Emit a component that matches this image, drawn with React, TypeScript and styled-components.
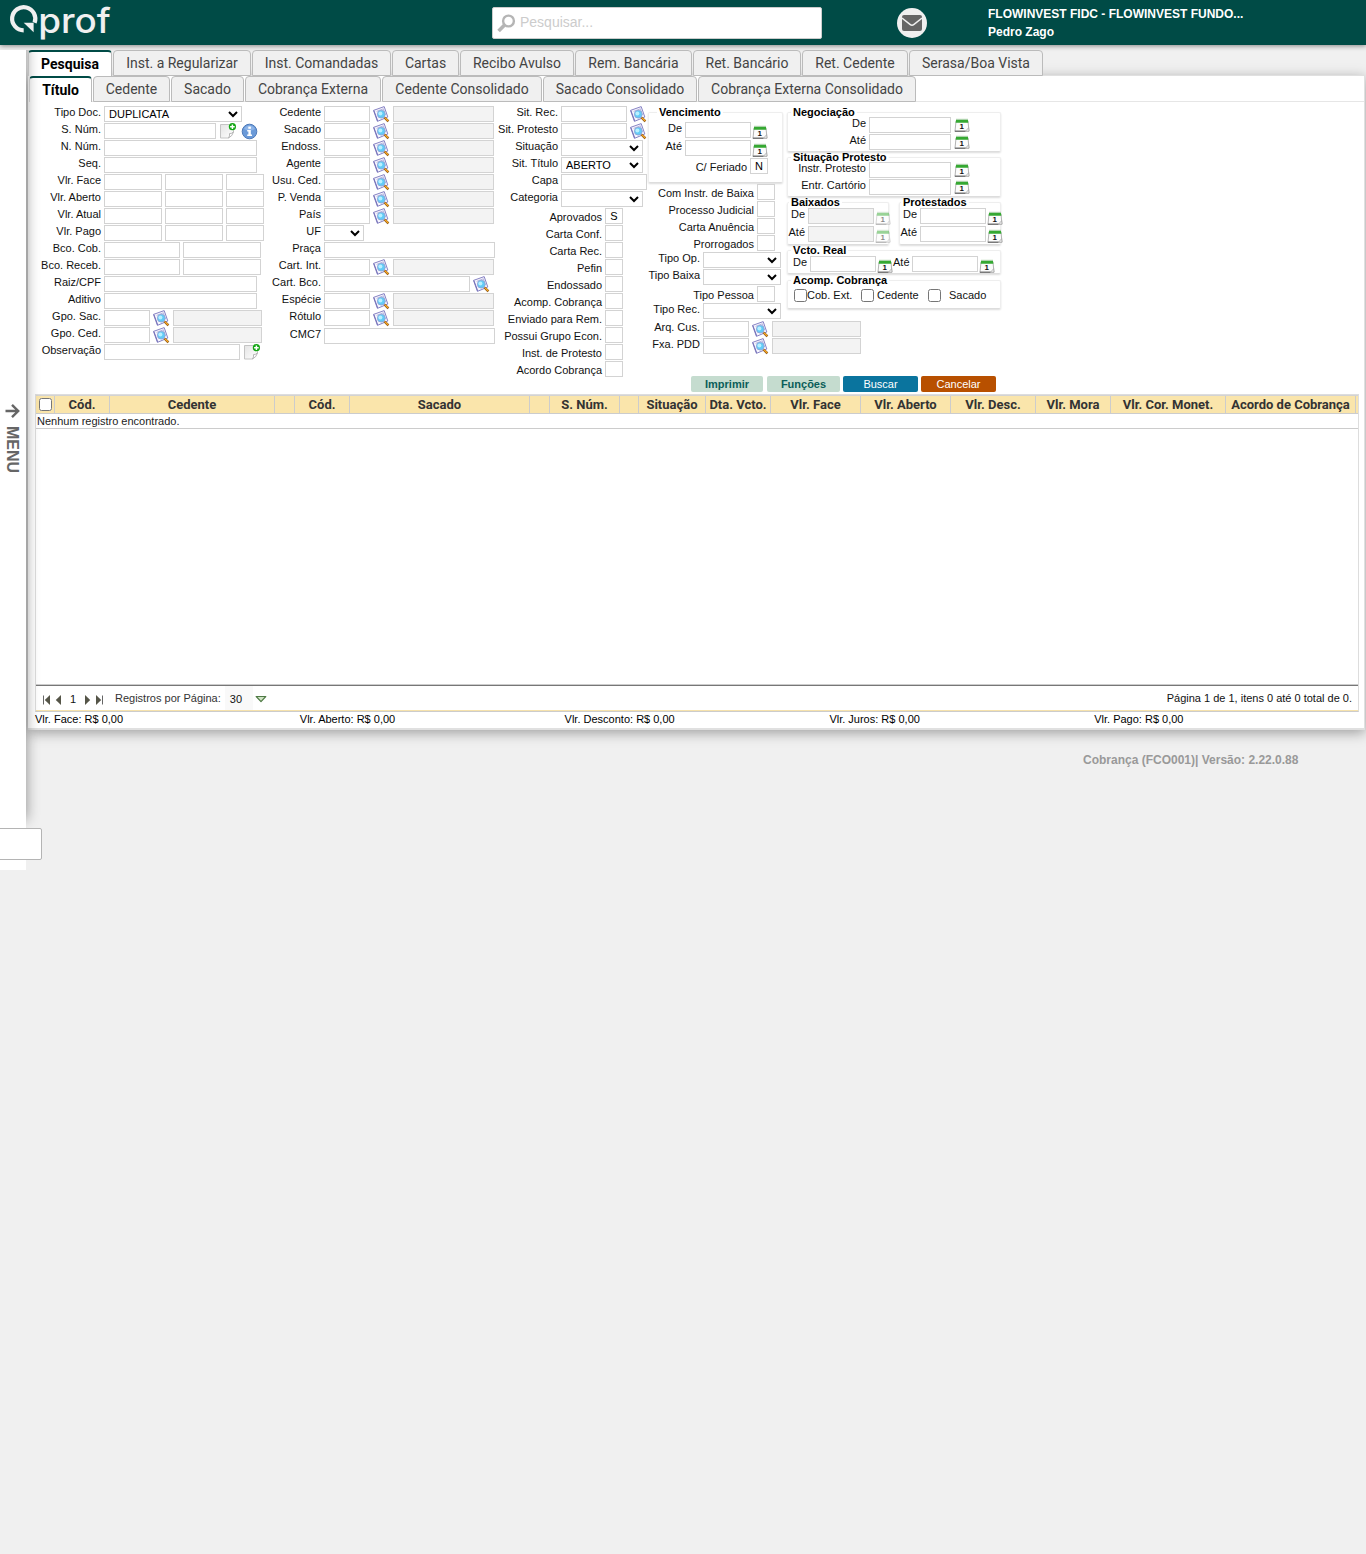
import React from "react";
import styled, { createGlobalStyle, css } from "styled-components";

const sans = '"Liberation Sans", Arial, sans-serif';
const roboto = 'Roboto, "Liberation Sans", sans-serif';
const teal = "#004b46";

const GlobalStyle = createGlobalStyle`
  html, body { margin: 0; padding: 0; background: #f0f0f0; }
  body { font-family: ${sans}; font-size: 11px; color: #111; }
  *, *::before, *::after { box-sizing: border-box; }
`;

const Page = styled.div`
  width: 1366px;
  min-height: 1554px;
  background: #f0f0f0;
  overflow: hidden;
`;

/* ---------- header ---------- */

const Header = styled.header`
  display: flex;
  height: 45px;
  background: ${teal};
  box-shadow: 0 1px 5px rgba(0, 0, 0, 0.45);
`;

const LogoBox = styled.div`
  width: 492px;
  padding-left: 9px;
  svg { display: block; overflow: visible; }
`;

const SearchBox = styled.label`
  display: flex;
  align-items: center;
  width: 330px;
  height: 32px;
  margin-top: 7px;
  padding-left: 4px;
  gap: 4px;
  background: #fff;
  border: 1px solid #ccc;
  border-radius: 2px;
`;

const SearchInput = styled.input`
  flex: 1;
  border: 0;
  outline: 0;
  padding: 0 0 2px;
  font: 14px ${sans};
  background: transparent;
  &::placeholder { color: #ccc; }
`;

const MailButton = styled.button`
  display: flex;
  align-items: center;
  justify-content: center;
  width: 30px;
  height: 30px;
  margin: 8px 0 0 75px;
  padding: 0;
  border: 0;
  border-radius: 50%;
  background: #f0f0f0;
`;

const UserInfo = styled.div`
  margin: 5px 0 0 61px;
  font: bold 12px/18px ${sans};
  color: #fff;
`;

/* ---------- body ---------- */

const Body = styled.div`
  display: flex;
  align-items: flex-start;
  padding-top: 5px;
`;

const Sidebar = styled.aside`
  position: relative;
  z-index: 2;
  width: 26px;
  height: 820px;
  background: #fff;
  flex: none;
`;

const MenuHandle = styled.div`
  display: flex;
  flex-direction: column;
  align-items: center;
  width: 26px;
  height: 778px;
  padding: 353px 1px 0 0;
  clip-path: inset(0 -30px -30px 0);
  box-shadow: 0 -8px 14px rgba(0, 0, 0, 0.42);
  background: #fff;
`;

const MenuText = styled.span`
  margin: 7px 1px 0 0;
  writing-mode: vertical-rl;
  font: bold 16px/18px ${sans};
  color: #666;
`;

const CornerBox = styled.div`
  position: absolute;
  left: -2px;
  top: 778px;
  width: 44px;
  height: 32px;
  background: #fff;
  border: 1px solid #b4b4b4;
  border-radius: 2px;
`;

const Main = styled.main`
  flex: none;
  width: 1337px;
  margin-left: 2px;
`;

const TabRow = styled.nav<{ $inner?: boolean }>`
  display: flex;
  gap: 1px;
  height: 26px;
  position: relative;
  ${(p) =>
    p.$inner &&
    css`
      border-bottom: 1px solid #e6e6e6;
    `}
`;

const Tab = styled.button<{ $w: number; $active?: boolean }>`
  flex: none;
  width: ${(p) => p.$w}px;
  height: 26px;
  padding: 0 0 1px;
  font: 14px ${roboto};
  color: #444;
  white-space: nowrap;
  background: #f0f0f0;
  border: 1px solid #bbb;
  border-radius: 4px 4px 0 0;
  ${(p) =>
    p.$active &&
    css`
      font-weight: bold;
      color: #000;
      background: #fff;
      border-top: 2px solid ${teal};
      border-bottom: 0;
      border-left-color: #e0e0e0;
    `}
`;

const Panel = styled.section`
  width: 1337px;
  height: 655px;
  margin-top: -1px;
  padding: 0 0 0 1px;
  background: #fff;
  border: 1px solid #e0e0e0;
  border-bottom-width: 2px;
  border-left-width: 0;
  box-shadow: 0 3px 12px rgba(0, 0, 0, 0.34);
`;

/* ---------- form ---------- */

const Columns = styled.div`
  display: flex;
  align-items: flex-start;
  height: 274px;
  padding-top: 4px;
`;

const Column = styled.div<{ $w: number; $top?: number }>`
  flex: none;
  width: ${(p) => p.$w}px;
  padding-top: ${(p) => p.$top ?? 0}px;
`;

const Row = styled.div<{ $h?: number; $mt?: number; $tight?: boolean }>`
  display: flex;
  align-items: flex-start;
  gap: ${(p) => (p.$tight ? 0 : 3)}px;
  height: ${(p) => p.$h ?? 17}px;
  margin-top: ${(p) => p.$mt ?? 0}px;
`;

const Label = styled.span<{ $w?: number; $drop?: number; $left?: boolean }>`
  flex: none;
  width: ${(p) => (p.$w ? `${p.$w}px` : "auto")};
  padding-top: ${(p) => p.$drop ?? 0}px;
  text-align: ${(p) => (p.$left ? "left" : "right")};
  line-height: 13px;
  white-space: nowrap;
`;

const Field = styled.input<{ $w: number }>`
  flex: none;
  width: ${(p) => p.$w}px;
  height: 16px;
  padding: 0;
  border: 1px solid #d3d3d3;
  border-radius: 0;
  background: #fff;
  font: 11px ${sans};
  color: #000;
  &:disabled { background: #f3f3f3; }
`;

const Flag = styled(Field).attrs({ $w: 18 })`
  text-align: center;
`;

const Select = styled.select<{ $w: number }>`
  flex: none;
  width: ${(p) => p.$w}px;
  height: 16px;
  padding: 0;
  border: 1px solid #d3d3d3;
  border-radius: 0;
  background-color: #fff;
  font: 11px ${sans};
  color: #000;
`;

const IconSlot = styled.span<{ $ml?: number; $mr?: number; $mt?: number; $dim?: boolean }>`
  flex: none;
  display: block;
  width: 16px;
  height: 16px;
  margin: ${(p) => p.$mt ?? 0}px ${(p) => p.$mr ?? 0}px 0 ${(p) => p.$ml ?? 0}px;
  opacity: ${(p) => (p.$dim ? 0.5 : 1)};
  svg { display: block; overflow: visible; }
`;

const Group = styled.div<{ $w: number; $h: number; $mt?: number }>`
  flex: none;
  width: ${(p) => p.$w}px;
  height: ${(p) => p.$h}px;
  margin-top: ${(p) => p.$mt ?? 0}px;
  border: 1px solid #eee;
  border-bottom-color: #ddd;
  border-radius: 2px;
  box-shadow: 0 1px 2px rgba(0, 0, 0, 0.14);
`;

const Legend = styled.div<{ $ml: number }>`
  width: max-content;
  height: 12px;
  margin: -7px 0 0 ${(p) => p.$ml}px;
  padding: 0 2px;
  background: linear-gradient(#fff, #fff) center / 100% 4px no-repeat;
  font: bold 11px/13px ${sans};
  color: #000;
`;

const GroupPair = styled.div`
  display: flex;
  justify-content: space-between;
  margin-top: 5px;
`;

const Check = styled.input.attrs({ type: "checkbox" })<{ $ml?: number; $mr?: number }>`
  flex: none;
  width: 13px;
  height: 13px;
  margin: 0 ${(p) => p.$mr ?? 0}px 0 ${(p) => p.$ml ?? 0}px;
`;

const Actions = styled.div`
  display: flex;
  gap: 3px;
  height: 18px;
  padding-left: 662px;
`;

const Button = styled.button<{ $w: number; $bg: string; $soft?: boolean; $mr?: number }>`
  width: ${(p) => p.$w}px;
  height: 16px;
  margin-right: ${(p) => p.$mr ?? 0}px;
  padding: 0;
  border: 0;
  border-radius: 2px;
  background: ${(p) => p.$bg};
  color: ${(p) => (p.$soft ? "#0b5e59" : "#fff")};
  font: ${(p) => (p.$soft ? "bold" : "normal")} 11px/16px ${sans};
`;

/* ---------- grid ---------- */

const Grid = styled.div`
  width: 1324px;
  height: 318px;
  margin-left: 6px;
  border: 1px solid #ddd;
  border-bottom-color: #ccc;
  display: flex;
  flex-direction: column;
`;

const HeadRow = styled.div`
  display: flex;
  height: 19px;
  background: #fae5ab;
  border-top: 1px solid #d3d3d3;
  border-bottom: 1px solid #ccc;
`;

const HeadCell = styled.div<{ $w: number }>`
  flex: none;
  display: flex;
  align-items: center;
  justify-content: center;
  width: ${(p) => p.$w}px;
  border-right: 1px solid #ccc;
  font: bold 13px/17px ${roboto};
  color: #333;
  white-space: nowrap;
`;

const EmptyRow = styled.div`
  height: 15px;
  padding-left: 1px;
  border-bottom: 1px solid #ccc;
  line-height: 15px;
  color: #222;
`;

const GridSpace = styled.div`
  flex: 1;
`;

const Pager = styled.div`
  display: flex;
  align-items: center;
  height: 26px;
  border-top: 1px solid #777;
  border-bottom: 1px solid #f6e2ac;
  padding: 0 6px 0 6px;
  box-shadow: 0 -1px 0 #ccc;
`;

const PageNo = styled.span`
  width: 22px;
  padding-top: 1px;
  text-align: center;
`;

const PagerLabel = styled.span`
  margin: 0 4px 0 11px;
  color: #333;
`;

const PageSize = styled.span`
  display: flex;
  align-items: center;
  width: 28px;
  height: 24px;
  margin-right: 2px;
  padding: 1px 0 0 5px;
  background: #f9f9f9;
`;

const PagerIcon = styled.span<{ $mr?: number; $mt?: number }>`
  margin: ${(p) => p.$mt ?? 4}px ${(p) => p.$mr ?? 0}px 0 0;
  svg { display: block; }
`;

const PagerSummary = styled.span`
  margin-left: auto;
`;

const Totals = styled.div`
  display: grid;
  grid-template-columns: repeat(5, 264.8px);
  margin-left: 6px;
  line-height: 14px;
  color: #000;
`;

const Version = styled.footer`
  margin: 23px 0 0 1055px;
  font: bold 12px/14px ${sans};
  color: #999;
`;

/* ---------- icons ---------- */

const Logo = () => (
  <svg width="104" height="45" viewBox="0 -4 104 45">
    <path d="M14.7 26.3 A11.6 11.6 0 1 1 25.6 18.7" fill="none" stroke="#f0f0f0" strokeWidth="4.2" />
    <path d="M14.7 18.7 H24.6 V28.3 Z" fill="#f0f0f0" />
    <text x="29.3" y="29" fontFamily="Inter, sans-serif" fontSize="34" fontWeight="500" fill="#f0f0f0" textLength="72.5" lengthAdjust="spacingAndGlyphs">
      prof
    </text>
  </svg>
);

const SearchGlyph = () => (
  <svg width="19" height="19" viewBox="0 0 19 19" fill="none" stroke="#b5b5b5">
    <circle cx="11.5" cy="7" r="5.4" strokeWidth="2.4" />
    <path d="M7.3 11.2 L1.6 17" strokeWidth="3.6" />
  </svg>
);

const MailGlyph = () => (
  <svg width="20" height="16" viewBox="0 0 20 16">
    <rect width="20" height="16" rx="2" fill="#666" />
    <path d="M0 3 L8 9.4 Q10 11 12 9.4 L20 3" fill="none" stroke="#f0f0f0" strokeWidth="1.4" />
  </svg>
);

const ArrowGlyph = () => (
  <svg width="15" height="16" viewBox="0 0 15 16" fill="none" stroke="#666" strokeWidth="2.4">
    <path d="M0.5 8 H13 M7 1.8 L13.2 8 L7 14.2" />
  </svg>
);

const Lookup = ({ mr }: { mr?: number }) => (
  <IconSlot $mr={mr}>
    <svg width="16" height="16" viewBox="0 0 16 16">
      <path d="M0.5 4.4 L11.2 0.6 L14.8 11 L4.4 15.4 Z" fill="#f6f5fd" stroke="#8783c4" strokeWidth="1" />
      <path d="M0.9 4.6 L4.7 14.9" stroke="#7570b8" strokeWidth="1" />
      <path d="M3.6 5.4 L10.4 2.8 L12.4 9" fill="none" stroke="#aaa7d8" strokeWidth="0.8" />
      <circle cx="8.3" cy="8.2" r="3.9" fill="#62ccf7" stroke="#8fa6d8" strokeWidth="0.9" />
      <circle cx="7.4" cy="7.6" r="2" fill="#b9f0ff" />
      <path d="M11.5 11.5 L15.4 15.4" stroke="#7a4a14" strokeWidth="2.4" />
      <path d="M11.9 11.7 L15.2 15" stroke="#f8a824" strokeWidth="1.4" />
    </svg>
  </IconSlot>
);

const NoteAdd = () => (
  <IconSlot $ml={1} $mr={2}>
    <svg width="16" height="16" viewBox="0 0 16 16">
      <defs>
        <linearGradient id="paper" x1="0" y1="0" x2="1" y2="1">
          <stop offset="0" stopColor="#e4e4e4" />
          <stop offset="1" stopColor="#fff" />
        </linearGradient>
      </defs>
      <path d="M0.5 1.5 H13.5 V9.5 L8.5 15 H0.5 Z" fill="url(#paper)" />
      <path d="M13.5 9 V7 M9 1.5 H0.5 V15 H8.5" fill="none" stroke="#c4c4c4" />
      <path d="M13.5 9 Q11.5 10.8 9.5 10.6 Q10 13 8.5 15 Q12.5 13 13.5 9 Z" fill="#fff" stroke="#999" strokeWidth="0.7" />
      <circle cx="12.4" cy="3.7" r="3.6" fill="#12a512" />
      <path d="M12.4 1.4 V6 M10.1 3.7 H14.7" stroke="#fff" strokeWidth="1.5" />
    </svg>
  </IconSlot>
);

const Info = () => (
  <IconSlot>
    <svg width="17" height="17" viewBox="0 0 17 17">
      <circle cx="8.5" cy="8.5" r="7.3" fill="#6b9ad8" stroke="#4d79b8" />
      <path d="M3 6 A6 6 0 0 1 14 6 Q8.5 9 3 6" fill="#8db4e8" />
      <rect x="7.3" y="3.6" width="2.6" height="2.2" fill="#fff" />
      <path d="M6.2 7 H9.8 V11.4 H11 V12.9 H6.2 V11.4 H7.4 V8.4 H6.2 Z" fill="#fff" />
    </svg>
  </IconSlot>
);

const Calendar = ({ ml, mr, mt, dim }: { ml?: number; mr?: number; mt?: number; dim?: boolean }) => (
  <IconSlot $ml={ml} $mr={mr} $mt={mt} $dim={dim}>
    <svg width="16" height="16" viewBox="0 -0.7 16 16">
      <path d="M2 3.5 H14 L15 13.5 H1 Z" fill="#fcfcfc" stroke="#aaa" strokeWidth="0.9" />
      <path d="M2 2 H14 L14.3 5 H1.7 Z" fill="#35a832" />
      <path d="M2 1.6 H14" stroke="#9cc79a" strokeWidth="0.8" />
      <path d="M0.8 13.5 H11.5" stroke="#555" strokeWidth="1" />
      <path d="M14.6 10 L11.5 13.5 H15 Z" fill="#eee" stroke="#999" strokeWidth="0.6" />
      <text x="7.8" y="11.6" textAnchor="middle" fontFamily="Liberation Sans" fontWeight="bold" fontSize="8" fill="#111">1</text>
    </svg>
  </IconSlot>
);

const PagerArrow = ({ back, bar, mr }: { back?: boolean; bar?: boolean; mr?: number }) => {
  const w = bar ? 9 : 7;
  return (
    <PagerIcon $mr={mr}>
      <svg width={w} height="10" viewBox={`0 0 ${w} 10`}>
        <g transform={back ? `translate(${w} 0) scale(-1 1)` : undefined}>
          <path d="M1 0 L6.2 5 L1 10 Z" fill="#555548" />
          {bar && <path d="M7.5 0.5 V9.5" stroke="#666" />}
        </g>
      </svg>
    </PagerIcon>
  );
};

const DropGlyph = () => (
  <PagerIcon $mt={2}>
    <svg width="12" height="8" viewBox="0 0 12 8">
      <path d="M1.2 1.5 H10.8 L6 6.6 Z" fill="#cfe3c4" stroke="#4f7a45" strokeWidth="1.2" strokeLinejoin="round" />
    </svg>
  </PagerIcon>
);

/* ---------- data ---------- */

const mainTabs: [string, number][] = [
  ["Pesquisa", 84], ["Inst. a Regularizar", 138], ["Inst. Comandadas", 139], ["Cartas", 67],
  ["Recibo Avulso", 114], ["Rem. Bancária", 117], ["Ret. Bancário", 108], ["Ret. Cedente", 106], ["Serasa/Boa Vista", 134],
];
const subTabs: [string, number][] = [
  ["Título", 63], ["Cedente", 77], ["Sacado", 73], ["Cobrança Externa", 136],
  ["Cedente Consolidado", 160], ["Sacado Consolidado", 154], ["Cobrança Externa Consolidado", 218],
];
const gridColumns: [string, number][] = [
  ["Cód.", 55], ["Cedente", 165], ["", 20], ["Cód.", 55], ["Sacado", 180], ["", 20], ["S. Núm.", 70], ["", 19],
  ["Situação", 67], ["Dta. Vcto.", 65], ["Vlr. Face", 90], ["Vlr. Aberto", 90], ["Vlr. Desc.", 85],
  ["Vlr. Mora", 75], ["Vlr. Cor. Monet.", 115], ["Acordo de Cobrança", 130],
];

const LookupRow = ({ label, lw, w }: { label: string; lw: number; w: number }) => (
  <Row>
    <Label $w={lw}>{label}</Label>
    <Field $w={46} />
    <Lookup mr={1} />
    <Field $w={w} disabled />
  </Row>
);

const FieldRow = ({ label, lw, widths, mt }: { label: string; lw: number; widths: number[]; mt?: number }) => (
  <Row $mt={mt}>
    <Label $w={lw}>{label}</Label>
    {widths.map((w, i) => <Field key={i} $w={w} />)}
  </Row>
);

const SelectRow = ({ label, lw, w, value = "" }: { label: string; lw: number; w: number; value?: string }) => (
  <Row>
    <Label $w={lw}>{label}</Label>
    <Select $w={w} defaultValue={value}><option>{value}</option></Select>
  </Row>
);

const FlagRow = ({ label, lw, value = "", mt }: { label: string; lw: number; value?: string; mt?: number }) => (
  <Row $mt={mt}>
    <Label $w={lw} $drop={3}>{label}</Label>
    <Flag defaultValue={value} />
  </Row>
);

export default function App() {
  return (
    <Page>
      <GlobalStyle />
      <Header>
        <LogoBox><Logo /></LogoBox>
        <SearchBox>
          <SearchGlyph />
          <SearchInput placeholder="Pesquisar..." />
        </SearchBox>
        <MailButton aria-label="Mensagens"><MailGlyph /></MailButton>
        <UserInfo>
          FLOWINVEST FIDC - FLOWINVEST FUNDO...<br />Pedro Zago
        </UserInfo>
      </Header>

      <Body>
        <Sidebar>
          <MenuHandle>
            <ArrowGlyph />
            <MenuText>MENU</MenuText>
          </MenuHandle>
          <CornerBox />
        </Sidebar>

        <Main>
          <TabRow>
            {mainTabs.map(([t, w], i) => <Tab key={t} $w={w} $active={i === 0}>{t}</Tab>)}
          </TabRow>
          <Panel>
            <TabRow $inner>
              {subTabs.map(([t, w], i) => <Tab key={t} $w={w} $active={i === 0}>{t}</Tab>)}
            </TabRow>

            <Columns>
              <Column $w={235}>
                <SelectRow label="Tipo Doc." lw={72} w={138} value="DUPLICATA" />
                <Row>
                  <Label $w={72}>S. Núm.</Label>
                  <Field $w={112} />
                  <NoteAdd />
                  <Info />
                </Row>
                <FieldRow label="N. Núm." lw={72} widths={[153]} />
                <FieldRow label="Seq." lw={72} widths={[153]} />
                {["Vlr. Face", "Vlr. Aberto", "Vlr. Atual", "Vlr. Pago"].map((l) => (
                  <FieldRow key={l} label={l} lw={72} widths={[58, 58, 38]} />
                ))}
                <FieldRow label="Bco. Cob." lw={72} widths={[76, 78]} />
                <FieldRow label="Bco. Receb." lw={72} widths={[76, 78]} />
                <FieldRow label="Raiz/CPF" lw={72} widths={[153]} />
                <FieldRow label="Aditivo" lw={72} widths={[153]} />
                <LookupRow label="Gpo. Sac." lw={72} w={89} />
                <LookupRow label="Gpo. Ced." lw={72} w={89} />
                <Row>
                  <Label $w={72}>Observação</Label>
                  <Field $w={136} />
                  <NoteAdd />
                </Row>
              </Column>

              <Column $w={231}>
                {["Cedente", "Sacado", "Endoss.", "Agente", "Usu. Ced.", "P. Venda", "País"].map((l) => (
                  <LookupRow key={l} label={l} lw={57} w={101} />
                ))}
                <SelectRow label="UF" lw={57} w={40} />
                <FieldRow label="Praça" lw={57} widths={[171]} />
                <LookupRow label="Cart. Int." lw={57} w={101} />
                <Row>
                  <Label $w={57}>Cart. Bco.</Label>
                  <Field $w={146} />
                  <Lookup />
                </Row>
                <LookupRow label="Espécie" lw={57} w={101} />
                <LookupRow label="Rótulo" lw={57} w={101} />
                <FieldRow label="CMC7" lw={57} widths={[171]} mt={1} />
              </Column>

              <Column $w={153}>
                {["Sit. Rec.", "Sit. Protesto"].map((l) => (
                  <Row key={l}>
                    <Label $w={63}>{l}</Label>
                    <Field $w={66} />
                    <Lookup />
                  </Row>
                ))}
                <SelectRow label="Situação" lw={63} w={82} />
                <SelectRow label="Sit. Título" lw={63} w={82} value="ABERTO" />
                <FieldRow label="Capa" lw={63} widths={[86]} />
                <SelectRow label="Categoria" lw={63} w={82} />
                {["Aprovados", "Carta Conf.", "Carta Rec.", "Pefin", "Endossado", "Acomp. Cobrança", "Enviado para Rem.",
                  "Possui Grupo Econ.", "Inst. de Protesto", "Acordo Cobrança"].map((l) => (
                  <FlagRow key={l} label={l} lw={107} value={l === "Aprovados" ? "S" : ""} />
                ))}
              </Column>

              <Column $w={139} $top={6}>
                <Group $w={135} $h={71}>
                  <Legend $ml={8}>Vencimento</Legend>
                  <Row $h={18} $mt={4}>
                    <Label $w={33}>De</Label>
                    <Field $w={66} />
                    <Calendar ml={-2} mt={2} />
                  </Row>
                  <Row $h={18}>
                    <Label $w={33}>Até</Label>
                    <Field $w={66} />
                    <Calendar ml={-2} mt={2} />
                  </Row>
                  <FlagRow label="C/ Feriado" lw={98} value="N" />
                </Group>
                <FlagRow label="Com Instr. de Baixa" lw={106} mt={1} />
                {["Processo Judicial", "Carta Anuência", "Prorrogados"].map((l) => <FlagRow key={l} label={l} lw={106} />)}
                <SelectRow label="Tipo Op." lw={52} w={78} />
                <SelectRow label="Tipo Baixa" lw={52} w={78} />
                <FlagRow label="Tipo Pessoa" lw={106} />
                <SelectRow label="Tipo Rec." lw={52} w={78} />
                <Row $mt={1}>
                  <Label $w={52}>Arq. Cus.</Label>
                  <Field $w={46} />
                  <Lookup mr={1} />
                  <Field $w={89} disabled />
                </Row>
                <LookupRow label="Fxa. PDD" lw={52} w={89} />
              </Column>

              <Column $w={214} $top={6}>
                <Group $w={214} $h={40}>
                  <Legend $ml={3}>Negociação</Legend>
                  {["De", "Até"].map((l, i) => (
                    <Row key={l} $mt={i ? 0 : -1}>
                      <Label $w={78}>{l}</Label>
                      <Field $w={82} />
                      <Calendar />
                    </Row>
                  ))}
                </Group>
                <Group $w={214} $h={40} $mt={5}>
                  <Legend $ml={3}>Situação Protesto</Legend>
                  {["Instr. Protesto", "Entr. Cartório"].map((l, i) => (
                    <Row key={l} $mt={i ? 0 : -1}>
                      <Label $w={78}>{l}</Label>
                      <Field $w={82} />
                      <Calendar />
                    </Row>
                  ))}
                </Group>
                <GroupPair>
                  {["Baixados", "Protestados"].map((g, gi) => (
                    <Group key={g} $w={102} $h={43}>
                      <Legend $ml={1}>{g}</Legend>
                      {["De", "Até"].map((l) => (
                        <Row key={l} $h={18}>
                          <Label $w={17}>{l}</Label>
                          <Field $w={66} disabled={gi === 0} />
                          <Calendar ml={-2} mt={2} dim={gi === 0} />
                        </Row>
                      ))}
                    </Group>
                  ))}
                </GroupPair>
                <Group $w={214} $h={24} $mt={5}>
                  <Legend $ml={3}>Vcto. Real</Legend>
                  <Row>
                    <Label $w={19}>De</Label>
                    <Field $w={66} />
                    <Calendar ml={-2} mr={-3} mt={2} />
                    <Label $w={16} $left>Até</Label>
                    <Field $w={66} />
                    <Calendar ml={-2} mt={2} />
                  </Row>
                </Group>
                <Group $w={214} $h={29} $mt={6}>
                  <Legend $ml={3}>Acomp. Cobrança</Legend>
                  <Row $mt={3} $tight>
                    <Check $ml={6} />
                    <Label $left $w={54}>Cob. Ext.</Label>
                    <Check $mr={3} />
                    <Label $left $w={51}>Cedente</Label>
                    <Check $mr={8} />
                    <Label $left>Sacado</Label>
                  </Row>
                </Group>
              </Column>
            </Columns>

            <Actions>
              <Button $w={72} $bg="#c5dccf" $soft $mr={1}>Imprimir</Button>
              <Button $w={73} $bg="#c5dccf" $soft>Funções</Button>
              <Button $w={75} $bg="#0a749e">Buscar</Button>
              <Button $w={75} $bg="#b85000">Cancelar</Button>
            </Actions>

            <Grid>
              <HeadRow>
                <HeadCell $w={19}><Check /></HeadCell>
                {gridColumns.map(([t, w], i) => <HeadCell key={i} $w={w}>{t}</HeadCell>)}
              </HeadRow>
              <EmptyRow>Nenhum registro encontrado.</EmptyRow>
              <GridSpace />
              <Pager>
                <PagerArrow back bar mr={4} />
                <PagerArrow back />
                <PageNo>1</PageNo>
                <PagerArrow mr={4} />
                <PagerArrow bar />
                <PagerLabel>Registros por Página:</PagerLabel>
                <PageSize>30</PageSize>
                <DropGlyph />
                <PagerSummary>Página 1 de 1, itens 0 até 0 total de 0.</PagerSummary>
              </Pager>
            </Grid>
            <Totals>
              <span>Vlr. Face: R$ 0,00</span>
              <span>Vlr. Aberto: R$ 0,00</span>
              <span>Vlr. Desconto: R$ 0,00</span>
              <span>Vlr. Juros: R$ 0,00</span>
              <span>Vlr. Pago: R$ 0,00</span>
            </Totals>
          </Panel>
          <Version>Cobrança (FCO001)| Versão: 2.22.0.88</Version>
        </Main>
      </Body>
    </Page>
  );
}
